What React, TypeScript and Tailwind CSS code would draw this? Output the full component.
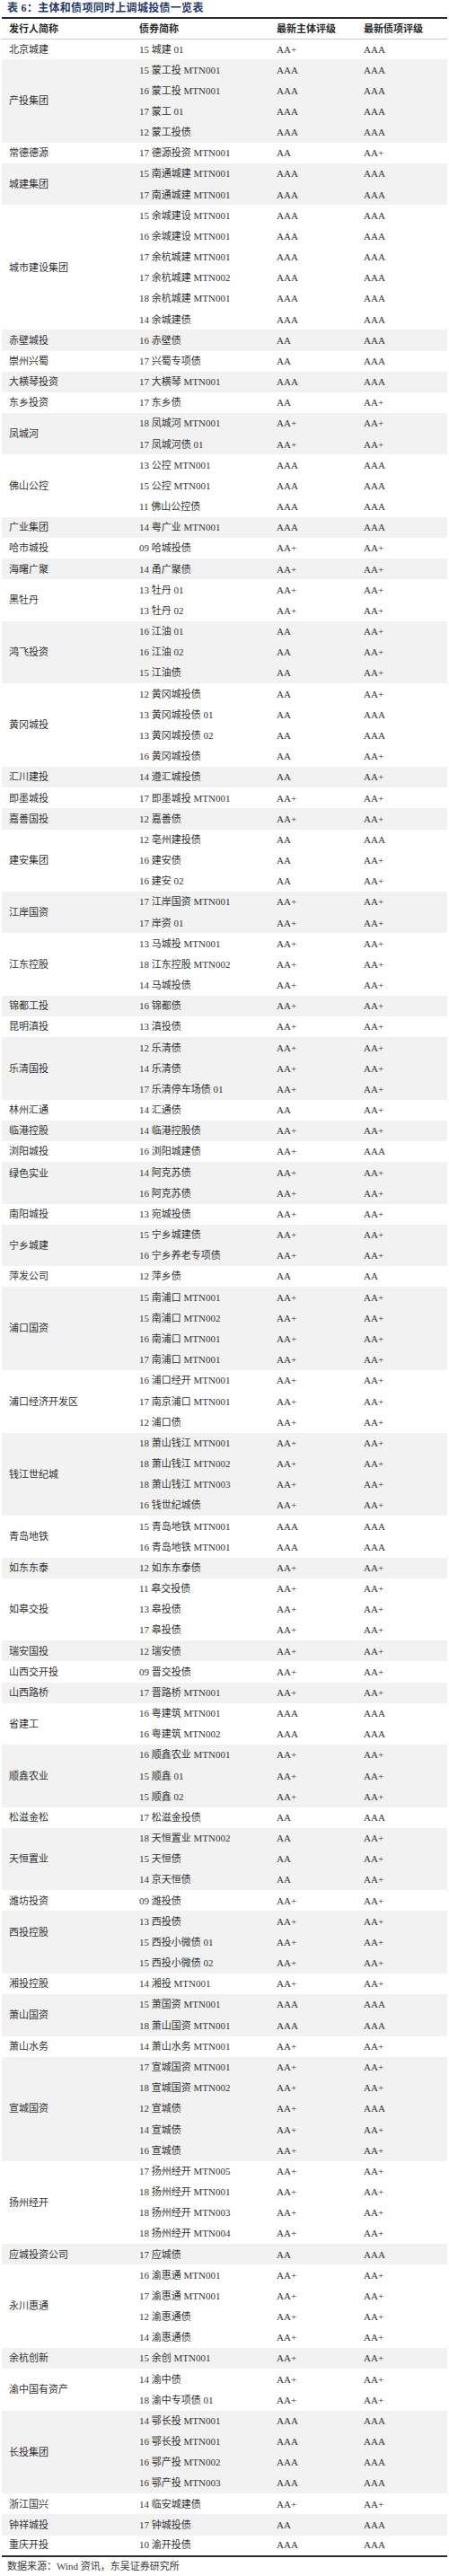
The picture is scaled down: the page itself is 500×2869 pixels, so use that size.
type Bond = [string, string, string];
type Group = { issuer: string; bonds: Bond[]; top?: boolean; lift?: boolean };

const groups: Group[] = [
  { issuer: "北京城建", bonds: [["15 城建 01", "AA+", "AAA"]] },
  {
    issuer: "产投集团",
    bonds: [
      ["15 蒙工投 MTN001", "AAA", "AAA"],
      ["16 蒙工投 MTN001", "AAA", "AAA"],
      ["17 蒙工 01", "AAA", "AAA"],
      ["12 蒙工投债", "AAA", "AAA"],
    ],
  },
  { issuer: "常德德源", bonds: [["17 德源投资 MTN001", "AA", "AA+"]] },
  {
    issuer: "城建集团",
    bonds: [
      ["15 南通城建 MTN001", "AAA", "AAA"],
      ["17 南通城建 MTN001", "AAA", "AAA"],
    ],
  },
  {
    issuer: "城市建设集团",
    bonds: [
      ["15 余城建设 MTN001", "AAA", "AAA"],
      ["16 余城建设 MTN001", "AAA", "AAA"],
      ["17 余杭城建 MTN001", "AAA", "AAA"],
      ["17 余杭城建 MTN002", "AAA", "AAA"],
      ["18 余杭城建 MTN001", "AAA", "AAA"],
      ["14 余城建债", "AAA", "AAA"],
    ],
  },
  { issuer: "赤壁城投", bonds: [["16 赤壁债", "AA", "AAA"]] },
  { issuer: "崇州兴蜀", bonds: [["17 兴蜀专项债", "AA", "AAA"]] },
  { issuer: "大横琴投资", bonds: [["17 大横琴 MTN001", "AAA", "AAA"]] },
  { issuer: "东乡投资", bonds: [["17 东乡债", "AA", "AA+"]] },
  {
    issuer: "凤城河",
    bonds: [
      ["18 凤城河 MTN001", "AA+", "AA+"],
      ["17 凤城河债 01", "AA+", "AA+"],
    ],
  },
  {
    issuer: "佛山公控",
    bonds: [
      ["13 公控 MTN001", "AAA", "AAA"],
      ["15 公控 MTN001", "AAA", "AAA"],
      ["11 佛山公控债", "AAA", "AAA"],
    ],
  },
  { issuer: "广业集团", bonds: [["14 粤广业 MTN001", "AAA", "AAA"]] },
  { issuer: "哈市城投", bonds: [["09 哈城投债", "AA+", "AA+"]] },
  { issuer: "海曙广聚", bonds: [["14 甬广聚债", "AA+", "AA+"]] },
  {
    issuer: "黑牡丹",
    bonds: [
      ["13 牡丹 01", "AA+", "AA+"],
      ["13 牡丹 02", "AA+", "AA+"],
    ],
  },
  {
    issuer: "鸿飞投资",
    bonds: [
      ["16 江油 01", "AA", "AA+"],
      ["16 江油 02", "AA", "AA+"],
      ["15 江油债", "AA", "AA+"],
    ],
  },
  {
    issuer: "黄冈城投",
    bonds: [
      ["12 黄冈城投债", "AA", "AA+"],
      ["13 黄冈城投债 01", "AA", "AAA"],
      ["13 黄冈城投债 02", "AA", "AAA"],
      ["16 黄冈城投债", "AA", "AA+"],
    ],
  },
  { issuer: "汇川建投", bonds: [["14 遵汇城投债", "AA", "AA+"]] },
  { issuer: "即墨城投", bonds: [["17 即墨城投 MTN001", "AA+", "AA+"]] },
  { issuer: "嘉善国投", bonds: [["12 嘉善债", "AA+", "AA+"]] },
  {
    issuer: "建安集团",
    bonds: [
      ["12 亳州建投债", "AA", "AAA"],
      ["16 建安债", "AA", "AA+"],
      ["16 建安 02", "AA", "AA+"],
    ],
  },
  {
    issuer: "江岸国资",
    bonds: [
      ["17 江岸国资 MTN001", "AA+", "AA+"],
      ["17 岸资 01", "AA+", "AA+"],
    ],
  },
  {
    issuer: "江东控股",
    bonds: [
      ["13 马城投 MTN001", "AA+", "AA+"],
      ["18 江东控股 MTN002", "AA+", "AA+"],
      ["14 马城投债", "AA+", "AA+"],
    ],
  },
  { issuer: "锦都工投", bonds: [["16 锦都债", "AA+", "AA+"]] },
  { issuer: "昆明滇投", bonds: [["13 滇投债", "AA+", "AA+"]] },
  {
    issuer: "乐清国投",
    bonds: [
      ["12 乐清债", "AA+", "AA+"],
      ["14 乐清债", "AA+", "AA+"],
      ["17 乐清停车场债 01", "AA+", "AA+"],
    ],
  },
  { issuer: "林州汇通", bonds: [["14 汇通债", "AA", "AA+"]] },
  { issuer: "临港控股", bonds: [["14 临港控股债", "AA+", "AA+"]] },
  { issuer: "浏阳城投", bonds: [["16 浏阳城建债", "AA+", "AAA"]] },
  {
    issuer: "绿色实业",
    top: true,
    bonds: [
      ["14 阿克苏债", "AA+", "AA+"],
      ["16 阿克苏债", "AA+", "AA+"],
    ],
  },
  { issuer: "南阳城投", bonds: [["13 宛城投债", "AA+", "AA+"]] },
  {
    issuer: "宁乡城建",
    bonds: [
      ["15 宁乡城建债", "AA+", "AA+"],
      ["16 宁乡养老专项债", "AA+", "AA+"],
    ],
  },
  { issuer: "萍发公司", bonds: [["12 萍乡债", "AA", "AA"]] },
  {
    issuer: "浦口国资",
    bonds: [
      ["15 南浦口 MTN001", "AA+", "AA+"],
      ["15 南浦口 MTN002", "AA+", "AA+"],
      ["16 南浦口 MTN001", "AA+", "AA+"],
      ["17 南浦口 MTN001", "AA+", "AA+"],
    ],
  },
  {
    issuer: "浦口经济开发区",
    bonds: [
      ["16 浦口经开 MTN001", "AA+", "AA+"],
      ["17 南京浦口 MTN001", "AA+", "AA+"],
      ["12 浦口债", "AA+", "AA+"],
    ],
  },
  {
    issuer: "钱江世纪城",
    bonds: [
      ["18 萧山钱江 MTN001", "AA+", "AA+"],
      ["18 萧山钱江 MTN002", "AA+", "AA+"],
      ["18 萧山钱江 MTN003", "AA+", "AA+"],
      ["16 钱世纪城债", "AA+", "AA+"],
    ],
  },
  {
    issuer: "青岛地铁",
    bonds: [
      ["15 青岛地铁 MTN001", "AAA", "AAA"],
      ["16 青岛地铁 MTN001", "AAA", "AAA"],
    ],
  },
  { issuer: "如东东泰", bonds: [["12 如东东泰债", "AA+", "AA+"]] },
  {
    issuer: "如皋交投",
    bonds: [
      ["11 皋交投债", "AA+", "AA+"],
      ["13 皋投债", "AA+", "AA+"],
      ["17 皋投债", "AA+", "AA+"],
    ],
  },
  { issuer: "瑞安国投", bonds: [["12 瑞安债", "AA+", "AA+"]] },
  { issuer: "山西交开投", bonds: [["09 晋交投债", "AA+", "AA+"]] },
  { issuer: "山西路桥", bonds: [["17 晋路桥 MTN001", "AA+", "AA+"]] },
  {
    issuer: "省建工",
    bonds: [
      ["16 粤建筑 MTN001", "AAA", "AAA"],
      ["16 粤建筑 MTN002", "AAA", "AAA"],
    ],
  },
  {
    issuer: "顺鑫农业",
    bonds: [
      ["16 顺鑫农业 MTN001", "AA+", "AA+"],
      ["15 顺鑫 01", "AA+", "AA+"],
      ["15 顺鑫 02", "AA+", "AA+"],
    ],
  },
  { issuer: "松滋金松", bonds: [["17 松滋金投债", "AA", "AAA"]] },
  {
    issuer: "天恒置业",
    bonds: [
      ["18 天恒置业 MTN002", "AA", "AA+"],
      ["15 天恒债", "AA", "AA+"],
      ["14 京天恒债", "AA", "AA+"],
    ],
  },
  { issuer: "潍坊投资", bonds: [["09 潍投债", "AA+", "AA+"]] },
  {
    issuer: "西投控股",
    lift: true,
    bonds: [
      ["13 西投债", "AA+", "AA+"],
      ["15 西投小微债 01", "AA+", "AA+"],
      ["15 西投小微债 02", "AA+", "AA+"],
    ],
  },
  { issuer: "湘投控股", bonds: [["14 湘投 MTN001", "AA+", "AA+"]] },
  {
    issuer: "萧山国资",
    bonds: [
      ["15 萧国资 MTN001", "AAA", "AAA"],
      ["18 萧山国资 MTN001", "AAA", "AAA"],
    ],
  },
  { issuer: "萧山水务", bonds: [["14 萧山水务 MTN001", "AA+", "AA+"]] },
  {
    issuer: "宣城国资",
    bonds: [
      ["17 宣城国资 MTN001", "AA+", "AA+"],
      ["18 宣城国资 MTN002", "AA+", "AA+"],
      ["12 宣城债", "AA+", "AAA"],
      ["14 宣城债", "AA+", "AA+"],
      ["16 宣城债", "AA+", "AA+"],
    ],
  },
  {
    issuer: "扬州经开",
    bonds: [
      ["17 扬州经开 MTN005", "AA+", "AA+"],
      ["18 扬州经开 MTN001", "AA+", "AA+"],
      ["18 扬州经开 MTN003", "AA+", "AA+"],
      ["18 扬州经开 MTN004", "AA+", "AA+"],
    ],
  },
  { issuer: "应城投资公司", bonds: [["17 应城债", "AA", "AAA"]] },
  {
    issuer: "永川惠通",
    bonds: [
      ["16 渝惠通 MTN001", "AA+", "AA+"],
      ["17 渝惠通 MTN001", "AA+", "AA+"],
      ["12 渝惠通债", "AA+", "AA+"],
      ["14 渝惠通债", "AA+", "AA+"],
    ],
  },
  { issuer: "余杭创新", bonds: [["15 余创 MTN001", "AA+", "AA+"]] },
  {
    issuer: "渝中国有资产",
    bonds: [
      ["14 渝中债", "AA+", "AA+"],
      ["18 渝中专项债 01", "AA+", "AA+"],
    ],
  },
  {
    issuer: "长投集团",
    bonds: [
      ["14 鄂长投 MTN001", "AAA", "AAA"],
      ["16 鄂长投 MTN001", "AAA", "AAA"],
      ["16 鄂产投 MTN002", "AAA", "AAA"],
      ["16 鄂产投 MTN003", "AAA", "AAA"],
    ],
  },
  { issuer: "浙江国兴", bonds: [["14 临安城建债", "AA+", "AA+"]] },
  { issuer: "钟祥城投", bonds: [["17 钟城投债", "AA", "AAA"]] },
  { issuer: "重庆开投", bonds: [["10 渝开投债", "AAA", "AAA"]] },
];

const font = "font-['Liberation_Serif','Noto_Sans_CJK_SC',serif]";

export default function App() {
  return (
    <div className={`w-[500px] bg-white text-[11px] text-[#333] ${font}`}>
      <div className="h-[19px] pl-[8px] text-[12px] leading-[19px] font-bold tracking-[0.3px] text-[#1f3a6b]">
        表 6：主体和债项同时上调城投债一览表
      </div>
      <table className="mx-[2px] w-[496px] table-fixed border-collapse border-t-2 border-b-2 border-[#2b2b2b]">
        <colgroup>
          <col className="w-[146px]" />
          <col className="w-[154px]" />
          <col className="w-[95px]" />
          <col className="w-[101px]" />
        </colgroup>
        <thead>
          <tr className="h-[23px] border-b border-[#c9c9c9] text-left font-semibold text-[#2a2a2a]">
            <th className="pl-[8px] font-semibold">发行人简称</th>
            <th className="pl-[7px] font-semibold">债券简称</th>
            <th className="pl-[6px] font-semibold">最新主体评级</th>
            <th className="pl-[8px] font-semibold">最新债项评级</th>
          </tr>
        </thead>
        <tbody>
          {groups.map((g, gi) =>
            g.bonds.map((b, bi) => (
              <tr
                key={`${gi}-${bi}`}
                className={`h-[23.18px] ${gi % 2 === 1 ? "bg-[#f2f2f2]" : "bg-white"}`}
              >
                {bi === 0 && (
                  <td
                    rowSpan={g.bonds.length}
                    className={`pl-[8px] ${g.top ? "align-top pt-[5px]" : "align-middle"} ${g.lift ? "pb-[22px]" : ""}`}
                  >
                    {g.issuer}
                  </td>
                )}
                <td className="pl-[7px] whitespace-nowrap">{b[0]}</td>
                <td className="pl-[6px]">{b[1]}</td>
                <td className="pl-[8px]">{b[2]}</td>
              </tr>
            ))
          )}
        </tbody>
      </table>
      <div className="h-[18px] pl-[8px] pt-[3px] text-[11px] leading-[15px] text-[#3a3a3a]">
        数据来源：Wind 资讯，东吴证券研究所
      </div>
    </div>
  );
}
